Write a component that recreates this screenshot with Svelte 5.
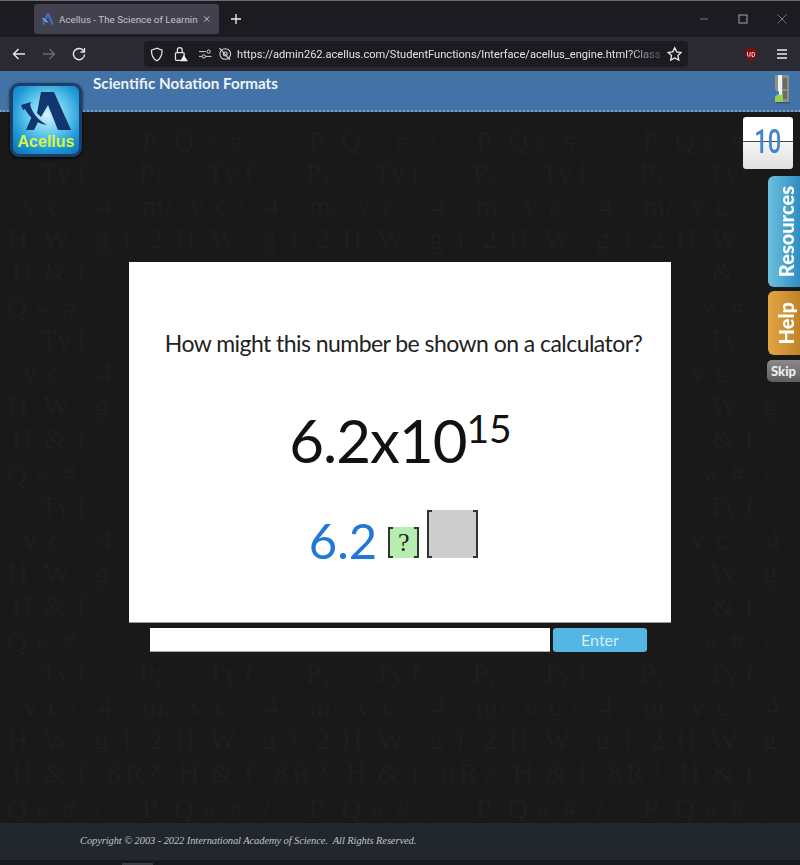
<script>
	// one tile of the faint maths wallpaper: [glyph, x, y] inside a 167px square
	const tile = [
		['P', 150, 29], ['Q', 15, 29], ['»', 43, 29], ['#', 70, 29], ['/', 103, 29],
		['P', 147, 61], [';', 163, 61], ['.', 13, 61], ['.', 23, 61], ['T', 48, 61], ['y', 65, 61], ['f', 85, 61], ['.', 100, 61], ['.', 110, 61],
		['m', 150, 94], ['/', 6, 94], ['v', 31, 94], ['c', 56, 94], ['/', 78, 94], ['4', 106, 94],
		['2', 157, 127], ['†', 128, 127], ['H', 16, 127], ['W', 51, 127], ['g', 103, 127],
		['R', 133, 160], ['?', 155, 160], ['8', 115, 160], ['&', 52, 160], ['f', 85, 160], ['H', 20, 160]
	];

	// the wallpaper stays off the edges and out from under the card, entry row and side buttons
	const covered = (x, y) =>
		(x > 108 && x < 690 && y > 132 && y < 545) ||
		(x > 738 && y < 290) ||
		(x < 90 && y < 52) ||
		x < 10 || x > 780 || y < 14 || y > 698;

	const glyphs = [];
	for (let row = 0; row < 5; row++) {
		for (let col = 0; col < 5; col++) {
			for (const [g, x, y] of tile) {
				const px = x + col * 167;
				const py = y + row * 167;
				if (!covered(px, py)) glyphs.push({ g, px, py });
			}
		}
	}
</script>

<div class="page">
	<div class="tabbar">
		<div class="tab">
			<svg class="tab-icon" width="13" height="14" viewBox="0 0 16 16"><path d="M1 15 7 1h3l6 14h-3L8.500 5 4 15z" fill="#3a6fc0"/><path d="M2 7l6 5" stroke="#8fb6e6" stroke-width="1.500"/></svg>
			<span class="tab-title">Acellus - The Science of Learnin</span>
			<svg width="10" height="10" viewBox="0 0 10 10"><path d="M1.500 1.500l7 7M8.500 1.500l-7 7" stroke="#d5d5d8" stroke-width="1.200"/></svg>
		</div>
		<svg class="plus" width="12" height="12" viewBox="0 0 12 12"><path d="M6 1v10M1 6h10" stroke="#f0f0f2" stroke-width="1.300"/></svg>
		<div class="window-btns">
			<svg width="10" height="10" viewBox="0 0 10 10"><path d="M1 5h8" stroke="#77767c"/></svg>
			<svg width="10" height="10" viewBox="0 0 10 10"><rect x="1" y="1" width="8" height="8" fill="none" stroke="#a5a5aa"/></svg>
			<svg width="10" height="10" viewBox="0 0 10 10"><path d="M.500.500l9 9M9.500.500l-9 9" stroke="#77767c"/></svg>
		</div>
	</div>

	<div class="toolbar">
		<div class="nav">
			<svg width="14" height="14" viewBox="0 0 14 14" fill="none" stroke="#e8e8ea" stroke-width="1.400"><path d="M13 7H1.500M6.500 2 1.500 7l5 5"/></svg>
			<svg width="14" height="14" viewBox="0 0 14 14" fill="none" stroke="#6a6970" stroke-width="1.400"><path d="M1 7h11.500M7.500 2l5 5-5 5"/></svg>
			<svg width="14" height="14" viewBox="0 0 14 14" fill="none" stroke="#e8e8ea" stroke-width="1.400"><path d="M12 4.500A5.600 5.600 0 1 0 12.600 7.500"/><path d="M12.500 1v4h-4" stroke-width="1.300"/></svg>
		</div>
		<div class="urlbar">
			<svg width="14" height="15" viewBox="0 0 14 15" fill="none" stroke="#e4e4e7" stroke-width="1.300"><path d="M7 1 1.500 3c0 5 1 8.500 5.500 11 4.500-2.500 5.500-6 5.500-11z"/></svg>
			<svg class="lock" width="15" height="16" viewBox="0 0 15 16"><rect x="1.500" y="6.500" width="9" height="8" rx="1" fill="none" stroke="#e4e4e7" stroke-width="1.300"/><path d="M3.500 6.500V4a2.500 2.500 0 0 1 5 0v2.500" fill="none" stroke="#e4e4e7" stroke-width="1.300"/><path d="M10 9l4.500 6.500h-8z" fill="#f2f2f2"/></svg>
			<svg class="perm" width="13" height="12" viewBox="0 0 13 12" fill="none" stroke="#d8d8db"><path d="M0 3.500h7M0 8.500h3M7 8.500h6"/><circle cx="10" cy="3.500" r="1.700"/><circle cx="5" cy="8.500" r="1.700"/></svg>
			<svg width="14" height="14" viewBox="0 0 14 14" fill="none" stroke="#d8d8db" stroke-width="1.100"><circle cx="7.500" cy="7" r="5.500"/><circle cx="7.500" cy="7" r="2"/><path d="M1.500 1l11 12"/></svg>
			<span class="url">https://admin262.acellus.com/StudentFunctions/Interface/acellus_engine.html?Class</span>
			<svg class="star" width="16" height="16" viewBox="0 0 16 16"><path d="M8 1.500l2 4.300 4.700.6-3.400 3.200.9 4.700L8 12l-4.200 2.300.9-4.700L1.300 6.400 6 5.800z" fill="none" stroke="#f0f0f2" stroke-width="1.300"/></svg>
		</div>
		<svg class="ublock" width="14" height="15" viewBox="0 0 14 15"><path d="M7 .5 1 2.500c0 6 1.500 9.500 6 12 4.500-2.500 6-6 6-12z" fill="#800f14"/><path d="M3.500 5v3a1.300 1.300 0 0 0 2.600 0V5M8 5.500h1.500a1 1 0 0 1 1 1v2a1 1 0 0 1-1 1H8z" fill="none" stroke="#f0d8d8" stroke-width=".9"/></svg>
		<svg class="menu" width="12" height="10" viewBox="0 0 12 10"><path d="M1 1h10M1 5h10M1 9h10" stroke="#ececee" stroke-width="1.400"/></svg>
	</div>

	<div class="app">
		<header class="header">
			<h1>Scientific Notation Formats</h1>
			<svg class="door" width="24" height="30" viewBox="0 0 24 30">
				<rect x="6" y="28" width="14" height="1.500" fill="#39577a" />
				<rect x="5" y="1" width="14" height="27" fill="#8c9186" />
				<rect x="8" y="1" width="4" height="20" fill="#f0f2ee" />
				<path d="M5 28V22l8-2v8z" fill="#93d24f" />
				<rect x="13" y="4" width="4" height="11" fill="#696c65" />
				<rect x="13" y="17" width="4" height="8" fill="#696c65" />
				<path d="M2 19l4-3.500v2h3v3H6v2z" fill="#3a70c2" />
			</svg>
		</header>

		<main class="stage">
			<div class="pattern" aria-hidden="true">
				{#each glyphs as { g, px, py }}
					<span style="left: {px}px; top: {py}px">{g}</span>
				{/each}
			</div>

			<div class="card">
				<p class="question">How might this number be shown on a calculator?</p>
				<p class="number">6.2x10<sup>15</sup></p>
				<div class="answer">
					<span class="coef">6.2</span>
					<span class="bracket small"><span>?</span></span>
					<span class="bracket big"></span>
				</div>
			</div>

			<form class="entry" on:submit|preventDefault>
				<input type="text" aria-label="Answer" />
				<button type="submit">Enter</button>
			</form>
		</main>

		<footer class="footer">
			<p>Copyright © 2003 - 2022 International Academy of Science.&nbsp; All Rights Reserved.</p>
		</footer>
		<div class="strip"><i></i></div>

		<!-- logo and side buttons hang over the header and stage -->
		<div class="logo">
			<svg width="62" height="48" viewBox="0 0 62 48">
				<path d="M26 4h13l17 38H43L33 17l-7 12-4-4z" fill="#12366f"/>
				<path d="M17 28l6 6-4 8h-8z" fill="#12366f"/>
				<path d="M6 17l10-3-1 3c3 9 8 15 17 20-10-1-18-8-22-16l-2 1z" fill="#12366f"/>
			</svg>
			<span>Acellus</span>
		</div>

		<div class="side">
			<div class="counter"><span>10</span></div>
			<div class="tabbtn resources"><span>Resources</span></div>
			<div class="tabbtn help"><span>Help</span></div>
			<div class="skip">Skip</div>
		</div>
	</div>
</div>

<style>
	:global(body) {
		margin: 0;
		background: #191919;
	}

	.page {
		width: 800px;
		height: 865px;
		display: flex;
		flex-direction: column;
		overflow: hidden;
		font-family: "Open Sans", "Liberation Sans", sans-serif;
	}

	.tabbar {
		height: 36px;
		border-top: 1px solid #6e6e72;
		background: #1c1b22;
		display: flex;
		align-items: center;
		flex-shrink: 0;
	}

	.tab {
		margin-left: 34px;
		width: 185px;
		height: 30px;
		box-sizing: border-box;
		padding: 0 9px 0 7px;
		border-radius: 3px;
		background: #42414d;
		display: flex;
		align-items: center;
		gap: 5px;
	}

	.tab-icon {
		flex-shrink: 0;
	}

	.tab-title {
		flex: 1;
		white-space: nowrap;
		font-family: "Roboto", sans-serif;
		font-size: 9.800px;
		color: #c2c2c8;
	}

	.plus {
		margin-left: 11px;
	}

	.window-btns {
		margin-left: auto;
		margin-right: 13px;
		display: flex;
		gap: 29px;
	}

	.toolbar {
		height: 34px;
		background: #2b2a33;
		display: flex;
		align-items: center;
		flex-shrink: 0;
	}

	.nav {
		margin-left: 12px;
		display: flex;
		gap: 16px;
	}

	.urlbar {
		margin-left: 58px;
		width: 544px;
		height: 26px;
		box-sizing: border-box;
		padding: 0 6px;
		border-radius: 4px;
		background: #1c1b22;
		display: flex;
		align-items: center;
		gap: 6px;
	}

	.lock {
		margin-left: 4px;
	}

	.perm {
		margin-left: 5px;
	}

	.url {
		flex: 1;
		white-space: nowrap;
		font-family: "Roboto", sans-serif;
		font-size: 11.100px;
		color: #e2e2e6;
		mask-image: linear-gradient(to right, #000 calc(100% - 34px), rgba(0, 0, 0, 0.3) calc(100% - 6px));
	}

	.ublock {
		margin-left: 56px;
	}

	.menu {
		margin-left: 18px;
	}

	.app {
		position: relative;
		flex: 1;
		display: flex;
		flex-direction: column;
		min-height: 0;
	}

	.header {
		height: 41px;
		flex-shrink: 0;
		box-sizing: border-box;
		background: #4272a6;
		border-bottom: 2px dotted #7f9dbd;
		padding-left: 93px;
		display: flex;
		justify-content: space-between;
		color: #fff;
	}

	h1 {
		margin: 3px 0 0;
		font-size: 15.200px;
		font-weight: 700;
		font-family: "Lato", sans-serif;
		color: #eef3f8;
	}

	.door {
		margin: 3px 6px 0 0;
	}

	.stage {
		position: relative;
		flex: 1;
		background: #191919;
		overflow: hidden;
		display: flex;
		flex-direction: column;
		align-items: center;
		padding-top: 150px;
	}

	.pattern {
		position: absolute;
		inset: 0;
		font-family: "Liberation Serif", serif;
		font-size: 28px;
		line-height: 16px;
		color: #1e1e1e;
		user-select: none;
	}

	.pattern span {
		position: absolute;
		margin: -8px 0 0 -8px;
	}

	.card {
		position: relative;
		width: 542px;
		height: 361px;
		box-sizing: border-box;
		padding-top: 65px;
		background: #fff;
		border-bottom: 1px solid #999;
		text-align: center;
	}

	.question {
		margin: 0;
		padding-left: 7px;
		font-family: "Lato", sans-serif;
		font-size: 23px;
		letter-spacing: -0.550px;
		line-height: 32px;
		color: #222;
	}

	.number {
		margin: 46px 0 0;
		padding-left: 1px;
		font-family: "Lato", sans-serif;
		font-size: 60px;
		letter-spacing: -1px;
		line-height: 70px;
		color: #111;
	}

	.number sup {
		font-size: 39px;
		letter-spacing: 0;
		line-height: 0;
		vertical-align: 20px;
	}

	.answer {
		margin-top: 31px;
		padding-right: 13px;
		display: flex;
		justify-content: center;
		align-items: flex-end;
		height: 60px;
	}

	.coef {
		font-family: "Lato", sans-serif;
		font-size: 49px;
		line-height: 56px;
		color: #1f78d8;
		margin-right: 11px;
		transform: translateY(2px);
	}

	.bracket {
		position: relative;
		box-sizing: border-box;
		display: flex;
		align-items: center;
		justify-content: center;
		border-left: 2px solid #333;
		border-right: 2px solid #333;
	}

	.bracket::before,
	.bracket::after {
		content: '';
		position: absolute;
		left: -2px;
		right: -2px;
		height: 2px;
		background: linear-gradient(to right, #333 5px, transparent 5px, transparent calc(100% - 5px), #333 calc(100% - 5px));
	}

	.bracket::before {
		top: 0;
	}

	.bracket::after {
		bottom: 0;
	}

	.small {
		width: 31px;
		height: 31px;
		background: #b5eeb0;
		margin: 0 8px 8px 0;
		font-family: "Liberation Serif", serif;
		font-size: 26px;
		color: #222;
	}

	.big {
		width: 51px;
		height: 48px;
		background: #cdcdcd;
		margin-bottom: 8px;
	}

	.entry {
		position: relative;
		margin: 5px 3px 0 0;
		width: 497px;
		height: 24px;
		display: flex;
		gap: 3px;
	}

	input {
		width: 400px;
		height: 24px;
		box-sizing: border-box;
		border: 0;
		border-bottom: 1px solid #aaa;
		background: #fff;
		padding: 0;
	}

	button {
		width: 94px;
		height: 24px;
		border: 0;
		border-radius: 3px;
		padding: 0 0 2px;
		background: #55b5e4;
		font-family: "Lato", sans-serif;
		font-size: 16px;
		color: #d4eef8;
	}

	.footer {
		height: 37px;
		flex-shrink: 0;
		box-sizing: border-box;
		padding: 0 0 3px 80px;
		background: #22272e;
		display: flex;
		align-items: center;
	}

	.footer p {
		margin: 0;
		font-family: "Liberation Serif", serif;
		font-style: italic;
		font-size: 10.500px;
		letter-spacing: -0.100px;
		color: #bfc4ca;
	}

	.strip {
		height: 5px;
		flex-shrink: 0;
		background: #16181b;
		position: relative;
	}

	.strip i {
		position: absolute;
		left: 122px;
		bottom: 0;
		width: 31px;
		height: 2px;
		background: #3a3b40;
	}

	.logo {
		position: absolute;
		left: 10px;
		top: 12px;
		width: 72px;
		height: 74px;
		box-sizing: border-box;
		border-radius: 9px;
		border: 3px solid #1c3f6a;
		background: radial-gradient(circle at 52% 42%, #d6f4fb 0%, #6accee 36%, #1f9ad8 66%, #0f6aac 100%);
		display: flex;
		flex-direction: column;
		align-items: center;
		box-shadow: 0 1px 3px #000;
	}

	.logo svg {
		margin-top: 2px;
		display: block;
	}

	.logo span {
		margin-top: -3px;
		font-family: "Liberation Sans", sans-serif;
		font-weight: 700;
		font-size: 16px;
		line-height: 17px;
		color: #d6f545;
	}

	.side {
		position: absolute;
		right: 0;
		top: 46px;
		display: flex;
		flex-direction: column;
		align-items: flex-end;
	}

	.counter {
		width: 50px;
		height: 52px;
		margin-right: 7px;
		border-radius: 3px;
		background: linear-gradient(#fff 46%, #444 46%, #444 48%, #f6f6f6 48%, #dfdfdf);
		text-align: center;
		font-family: "Roboto", sans-serif;
		font-weight: 500;
		font-size: 33px;
		line-height: 50px;
		color: #3f86cf;
	}

	.counter span {
		display: inline-block;
		transform: scaleX(0.720);
	}

	.tabbtn {
		width: 32px;
		box-sizing: border-box;
		padding-left: 3px;
		border-radius: 6px 0 0 6px;
		display: flex;
		align-items: center;
		justify-content: center;
		font-family: "Lato", sans-serif;
		font-weight: 900;
		color: #fff;
		font-size: 20px;
	}

	.tabbtn span {
		writing-mode: vertical-rl;
		transform: rotate(180deg);
	}

	.resources {
		margin-top: 7px;
		height: 111px;
		background: linear-gradient(to right, #6cc0de, #2f8ec0);
	}

	.help {
		margin-top: 4px;
		height: 64px;
		background: linear-gradient(to right, #e2a544, #c08428);
	}

	.skip {
		width: 33px;
		height: 22px;
		margin-top: 5px;
		border-radius: 5px 0 0 5px;
		background: linear-gradient(#8a8a8a, #5e5e5e);
		font-family: "Lato", sans-serif;
		font-weight: 900;
		font-size: 13px;
		line-height: 22px;
		text-align: center;
		color: #eee;
	}
</style>
